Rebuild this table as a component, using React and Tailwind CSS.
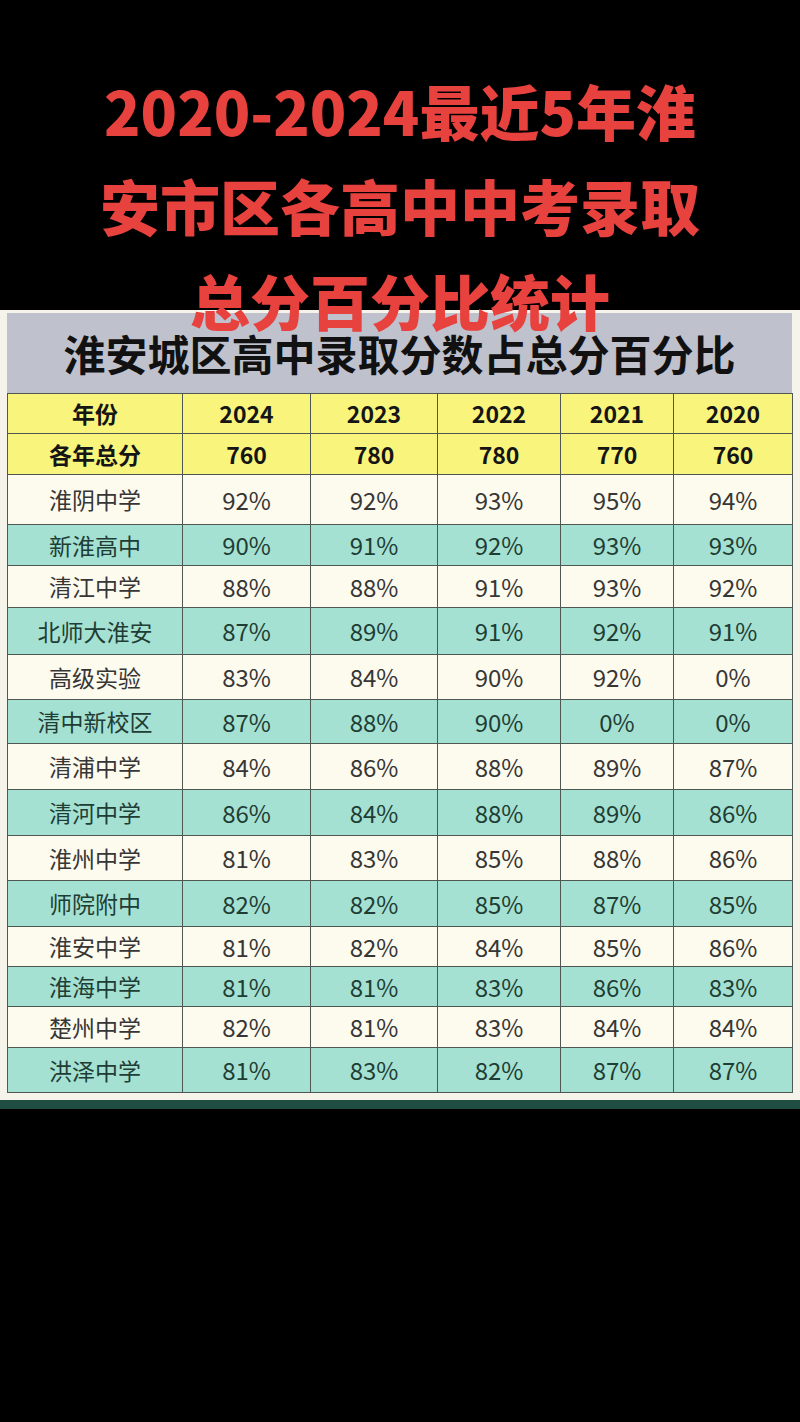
import React from "react";

const years = ["2024", "2023", "2022", "2021", "2020"];
const totals = ["760", "780", "780", "770", "760"];

// 各校录取分数占总分百分比
const schools = [
  { name: "淮阴中学", vals: ["92%", "92%", "93%", "95%", "94%"], h: "h-[50px]" },
  { name: "新淮高中", vals: ["90%", "91%", "92%", "93%", "93%"], h: "h-[41px]" },
  { name: "清江中学", vals: ["88%", "88%", "91%", "93%", "92%"], h: "h-[42px]" },
  { name: "北师大淮安", vals: ["87%", "89%", "91%", "92%", "91%"], h: "h-[47px]" },
  { name: "高级实验", vals: ["83%", "84%", "90%", "92%", "0%"], h: "h-[45px]" },
  { name: "清中新校区", vals: ["87%", "88%", "90%", "0%", "0%"], h: "h-[44px]" },
  { name: "清浦中学", vals: ["84%", "86%", "88%", "89%", "87%"], h: "h-[46px]" },
  { name: "清河中学", vals: ["86%", "84%", "88%", "89%", "86%"], h: "h-[46px]" },
  { name: "淮州中学", vals: ["81%", "83%", "85%", "88%", "86%"], h: "h-[45px]" },
  { name: "师院附中", vals: ["82%", "82%", "85%", "87%", "85%"], h: "h-[46px]" },
  { name: "淮安中学", vals: ["81%", "82%", "84%", "85%", "86%"], h: "h-[40px]" },
  { name: "淮海中学", vals: ["81%", "81%", "83%", "86%", "83%"], h: "h-[40px]" },
  { name: "楚州中学", vals: ["82%", "81%", "83%", "84%", "84%"], h: "h-[41px]" },
  { name: "洪泽中学", vals: ["81%", "83%", "82%", "87%", "87%"], h: "h-[45px]" },
];

const cell = "border border-[#4f5753] text-center align-middle p-0";

export default function App() {
  return (
    <div
      className="w-[800px] h-[1422px] bg-black overflow-hidden"
      style={{ fontFamily: '"Noto Sans CJK SC", "Noto Sans", sans-serif' }}
    >
      {/* 标题 */}
      <div className="relative z-10 pt-[62px] -mb-[37px] text-center text-[60px] leading-[95px] font-black text-[#e8423f]">
        <p>2020-2024最近5年淮</p>
        <p>安市区各高中中考录取</p>
        <p>总分百分比统计</p>
      </div>

      {/* 表格面板 */}
      <div className="bg-[#f6f4ea] pt-[3px] pl-[7px] pr-[8px] pb-[7px]">
        <div className="h-[80px] bg-[#bfc1cd] flex items-center justify-center">
          <h2 className="text-[42px] font-bold text-[#111] leading-none">淮安城区高中录取分数占总分百分比</h2>
        </div>

        <table className="table-fixed border-collapse w-[785px]">
          <colgroup>
            <col className="w-[175px]" />
            <col className="w-[128px]" />
            <col className="w-[127px]" />
            <col className="w-[123px]" />
            <col className="w-[113px]" />
            <col className="w-[119px]" />
          </colgroup>
          <thead className="bg-[#f8f47c] text-[#151515] font-bold text-[23px]">
            <tr className="h-[40px]">
              <th className={cell}>年份</th>
              {years.map((y) => (
                <th key={y} className={cell}>{y}</th>
              ))}
            </tr>
            <tr className="h-[41px]">
              <th className={cell}>各年总分</th>
              {totals.map((t, i) => (
                <th key={i} className={cell}>{t}</th>
              ))}
            </tr>
          </thead>
          <tbody>
            {schools.map((s, idx) => (
              <tr
                key={s.name}
                className={
                  s.h +
                  (idx % 2 === 0
                    ? " bg-[#fdfaee] text-[#363636]"
                    : " bg-[#a5e1d2] text-[#1e3d35]")
                }
              >
                <td className={cell + " text-[23px]"}>{s.name}</td>
                {s.vals.map((v, i) => (
                  <td key={i} className={cell + " text-[24px]"}>{v}</td>
                ))}
              </tr>
            ))}
          </tbody>
        </table>
      </div>
      <div className="h-[9px] bg-[#1f4d42]" />
    </div>
  );
}
